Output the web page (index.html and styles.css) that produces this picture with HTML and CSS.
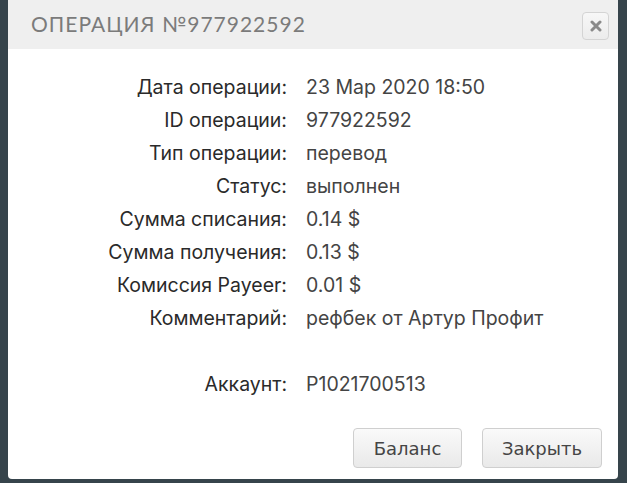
FILE: index.html
```html
<!DOCTYPE html>
<html>
<head>
<meta charset="utf-8">
<link rel="stylesheet" href="styles.css">
</head>
<body>
<div class="dialog">
  <div class="header">
    <div class="title">ОПЕРАЦИЯ №977922592</div>
    <button class="close" aria-label="close">
      <svg width="12" height="12" viewBox="0 0 12 12"><path d="M2 2 L10 10 M10 2 L2 10" stroke="#8a8a8a" stroke-width="3" stroke-linecap="round"/></svg>
    </button>
  </div>
  <div class="content">
    <div class="rows">
      <div class="label">Дата операции:</div><div class="value">23 Мар 2020 18:50</div>
      <div class="label">ID операции:</div><div class="value">977922592</div>
      <div class="label">Тип операции:</div><div class="value">перевод</div>
      <div class="label">Статус:</div><div class="value">выполнен</div>
      <div class="label">Сумма списания:</div><div class="value">0.14 $</div>
      <div class="label">Сумма получения:</div><div class="value">0.13 $</div>
      <div class="label">Комиссия Payeer:</div><div class="value">0.01 $</div>
      <div class="label">Комментарий:</div><div class="value">рефбек от Артур Профит</div>
      <div class="spacer"></div><div class="spacer"></div>
      <div class="label">Аккаунт:</div><div class="value">P1021700513</div>
    </div>
    <div class="buttons">
      <button class="btn">Баланс</button>
      <button class="btn">Закрыть</button>
    </div>
  </div>
</div>
</body>
</html>
```
FILE: styles.css
```css
html, body {
  margin: 0;
  padding: 0;
  background: #36444b;
  height: 100%;
}
body {
  padding: 0 9px 0 8px;
  box-sizing: border-box;
}
.dialog {
  background: #fff;
  height: 479px;
  border-radius: 0 0 4px 4px;
  display: flex;
  flex-direction: column;
}
.header {
  height: 49px;
  background: #efefef;
  display: flex;
  align-items: center;
  justify-content: space-between;
  padding: 0 9px 0 23px;
}
.title {
  font-family: "Lato", sans-serif;
  font-size: 21px;
  letter-spacing: 1px;
  color: #7b7b7b;
  margin-top: -2px;
}
.close {
  width: 27px;
  height: 28px;
  border: 1px solid #d4d4d4;
  border-radius: 4px;
  background: linear-gradient(#f7f7f7, #ececec);
  display: flex;
  align-items: center;
  justify-content: center;
  padding: 0;
  margin-top: 2px;
}
.content {
  flex: 1;
  display: flex;
  flex-direction: column;
}
.rows {
  display: grid;
  grid-template-columns: 279px auto;
  column-gap: 19px;
  grid-auto-rows: 33px;
  align-items: center;
  padding-top: 21px;
  font-family: "Inter", sans-serif;
  font-size: 19.5px;
}
.label {
  text-align: right;
  color: #2a2a2a;
}
.value {
  color: #444;
}
.buttons {
  display: flex;
  justify-content: flex-end;
  gap: 20px;
  padding: 0 16px 0 0;
  margin-top: auto;
  margin-bottom: 11px;
}
.btn {
  height: 40px;
  border: 1px solid #cfcfcf;
  border-radius: 4px;
  background: linear-gradient(#fafafa, #e9e9e9);
  font-family: "DejaVu Sans", sans-serif;
  font-size: 18px;
  color: #454545;
  padding: 0;
}
.btn:first-child { width: 109px; }
.btn:last-child { width: 120px; }
```
